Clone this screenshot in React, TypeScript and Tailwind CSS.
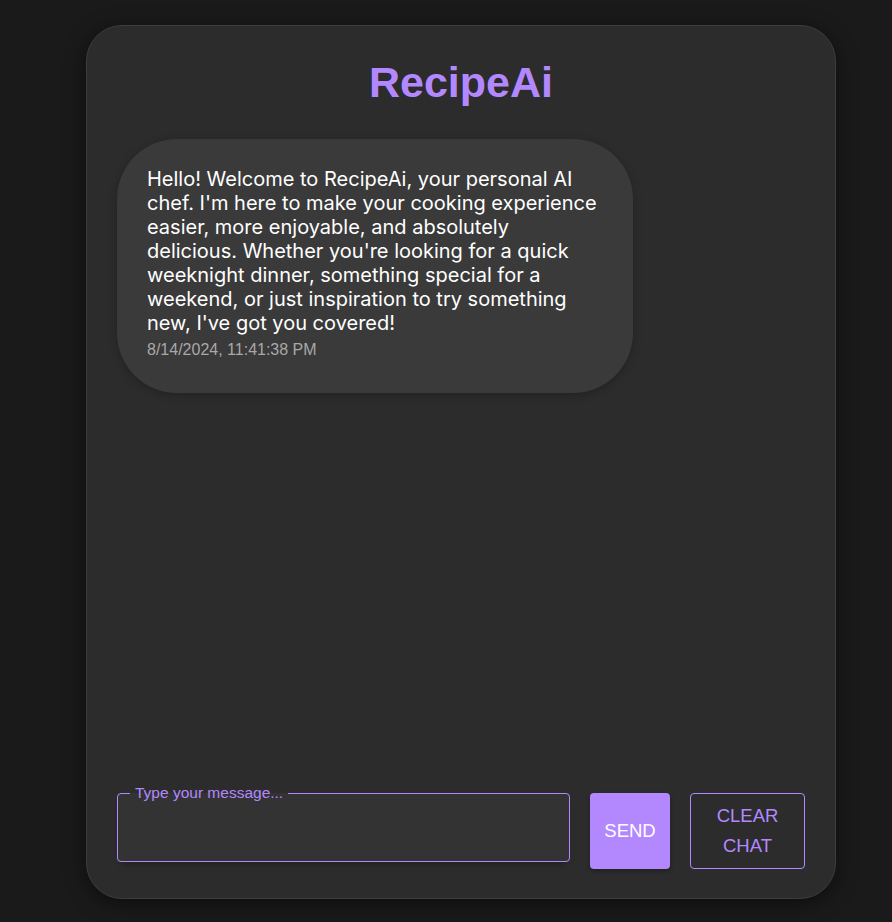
import { useState } from "react";

export default function App() {
  const [text, setText] = useState("");

  return (
    <div className="min-h-[922px] w-full bg-[#1a1a1a] flex pl-[86px] pt-[25px] font-['Liberation_Sans',Arial,sans-serif]">
      <div className="w-[750px] h-[874px] rounded-[36px] border border-[#3d3d3d] bg-[#2c2c2c] shadow-[0_4px_20px_rgba(0,0,0,0.5)] px-[30px] pt-[30px] pb-[29px] flex flex-col">
        {/* Title */}
        <h1 className="text-center text-[43px] leading-[52px] font-bold text-[#b388ff]">RecipeAi</h1>

        {/* Messages */}
        <div className="flex-1 mt-[31px] flex flex-col items-start">
          <div className="w-[516px] rounded-[60px] bg-[#3a3a3a] shadow-[0_2px_8px_rgba(0,0,0,0.25)] pl-[30px] pr-[34px] pt-[28px] pb-[32px]">
            <p className="font-['Inter',sans-serif] text-[20px] leading-[24px] text-white">
              Hello! Welcome to RecipeAi, your personal AI chef. I'm here to make your cooking experience easier, more enjoyable, and absolutely delicious. Whether you're looking for a quick weeknight dinner, something special for a weekend, or just inspiration to try something new, I've got you covered!
            </p>
            <div className="text-[16px] leading-[22px] text-[#a8a8a8] mt-[4px]">8/14/2024, 11:41:38 PM</div>
          </div>
        </div>

        {/* Input row */}
        <div className="flex items-start gap-[20px]">
          <div className="relative w-[453px] h-[69px] shadow-[0_6px_6px_-4px_rgba(0,0,0,0.3)]">
            <fieldset className="absolute inset-0 rounded-[4px] border border-[#b388ff] bg-[#333333] px-[12px] -top-[7px]">
              <legend className="px-[5px] text-[15.5px] leading-[14px] text-[#b388ff]">Type your message...</legend>
            </fieldset>
            <input
              value={text}
              onChange={(e) => setText(e.target.value)}
              className="relative w-full h-full bg-transparent outline-none px-[14px] text-white text-[16px]"
            />
          </div>
          <button className="w-[80px] h-[76px] rounded-[4px] bg-[#b388ff] text-white text-[18.5px] shadow-[0_2px_4px_rgba(0,0,0,0.3)]">
            SEND
          </button>
          <button className="w-[115px] h-[76px] rounded-[4px] border border-[#b388ff] text-[#b388ff] text-[18.5px] leading-[30px]">
            CLEAR
            <br />
            CHAT
          </button>
        </div>
      </div>
    </div>
  );
}
